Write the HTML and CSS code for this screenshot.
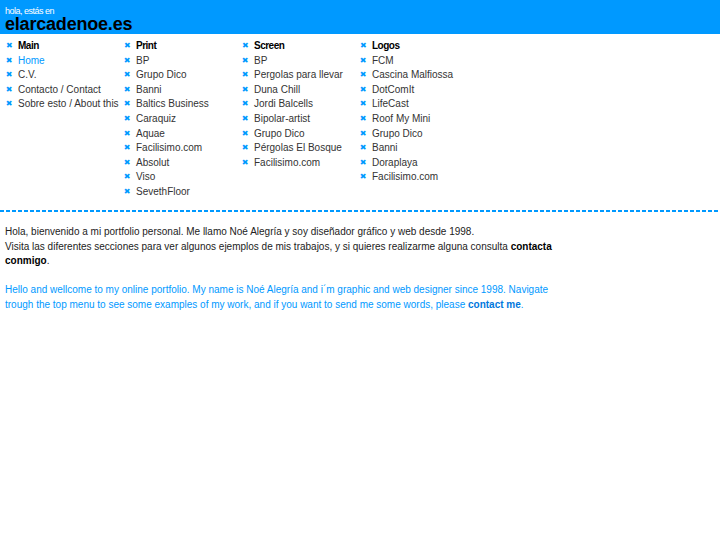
FILE: index.html
```html
<!DOCTYPE html>
<html lang="es">
<head>
<meta charset="utf-8">
<title>elarcadenoe.es</title>
<link rel="stylesheet" href="styles.css">
</head>
<body>
<div class="page">
  <header class="top">
    <div class="hello">hola, estás en</div>
    <div class="site">elarcadenoe.es</div>
  </header>
  <nav class="menu">
    <ul class="col">
      <li class="head">Main</li>
      <li class="active">Home</li>
      <li>C.V.</li>
      <li>Contacto / Contact</li>
      <li>Sobre esto / About this</li>
    </ul>
    <ul class="col">
      <li class="head">Print</li>
      <li>BP</li>
      <li>Grupo Dico</li>
      <li>Banni</li>
      <li>Baltics Business</li>
      <li>Caraquiz</li>
      <li>Aquae</li>
      <li>Facilisimo.com</li>
      <li>Absolut</li>
      <li>Viso</li>
      <li>SevethFloor</li>
    </ul>
    <ul class="col">
      <li class="head">Screen</li>
      <li>BP</li>
      <li>Pergolas para llevar</li>
      <li>Duna Chill</li>
      <li>Jordi Balcells</li>
      <li>Bipolar-artist</li>
      <li>Grupo Dico</li>
      <li>Pérgolas El Bosque</li>
      <li>Facilisimo.com</li>
    </ul>
    <ul class="col">
      <li class="head">Logos</li>
      <li>FCM</li>
      <li>Cascina Malfiossa</li>
      <li>DotComIt</li>
      <li>LifeCast</li>
      <li>Roof My Mini</li>
      <li>Grupo Dico</li>
      <li>Banni</li>
      <li>Doraplaya</li>
      <li>Facilisimo.com</li>
    </ul>
  </nav>
  <div class="sep"></div>
  <section class="content">
    <p class="es">Hola, bienvenido a mi portfolio personal. Me llamo Noé Alegría y soy diseñador gráfico y web desde 1998.<br>Visita las diferentes secciones para ver algunos ejemplos de mis trabajos, y si quieres realizarme alguna consulta <b>contacta conmigo</b>.</p>
    <p class="en">Hello and wellcome to my online portfolio. My name is Noé Alegría and i´m graphic and web designer since 1998. Navigate trough the top menu to see some examples of my work, and if you want to send me some words, please <b>contact me</b>.</p>
  </section>
</div>
</body>
</html>
```
FILE: styles.css
```css
html, body {
  margin: 0;
  padding: 0;
  background: #fff;
}
body {
  font-family: "Liberation Sans", Arial, sans-serif;
  font-size: 10px;
  color: #333;
}
.page {
  width: 720px;
}
.top {
  background: #0099ff;
  height: 34px;
  padding: 6px 0 0 5px;
  box-sizing: border-box;
  color: #000;
}
.hello {
  font-size: 9px;
  line-height: 10px;
  color: #fff;
  letter-spacing: -0.5px;
}
.site {
  font-size: 18px;
  font-weight: bold;
  line-height: 17px;
  letter-spacing: -0.2px;
}
.menu {
  display: grid;
  grid-template-columns: 118px 118px 118px 118px;
  padding: 5px 0 0 4px;
  height: 176px;
  box-sizing: border-box;
}
.col {
  list-style: none;
  margin: 0;
  padding: 0;
}
.col li {
  line-height: 14.6px;
  height: 14.6px;
  display: flex;
  align-items: center;
  gap: 4px;
  white-space: nowrap;
}
.col li::before {
  content: "\2716";
  color: #0099ff;
  font-family: "DejaVu Sans", sans-serif;
  font-size: 8px;
  width: 10px;
  text-align: center;
  flex: none;
}
.col li.head {
  font-weight: bold;
  color: #000;
  letter-spacing: -0.5px;
}
.col li.active {
  color: #0099ff;
}
.sep {
  height: 2px;
  width: 718px;
  background: repeating-linear-gradient(to right, #0099ff 0 4px, transparent 4px 6px);
}
.content {
  width: 560px;
  padding: 13px 5px 0 5px;
}
.content p {
  margin: 0 0 14px 0;
  line-height: 14.7px;
}
.content .es {
  color: #222;
}
.content .es b {
  color: #000;
}
.content .en {
  color: #0099ff;
}
.content .en b {
  color: #0077dd;
}
```
